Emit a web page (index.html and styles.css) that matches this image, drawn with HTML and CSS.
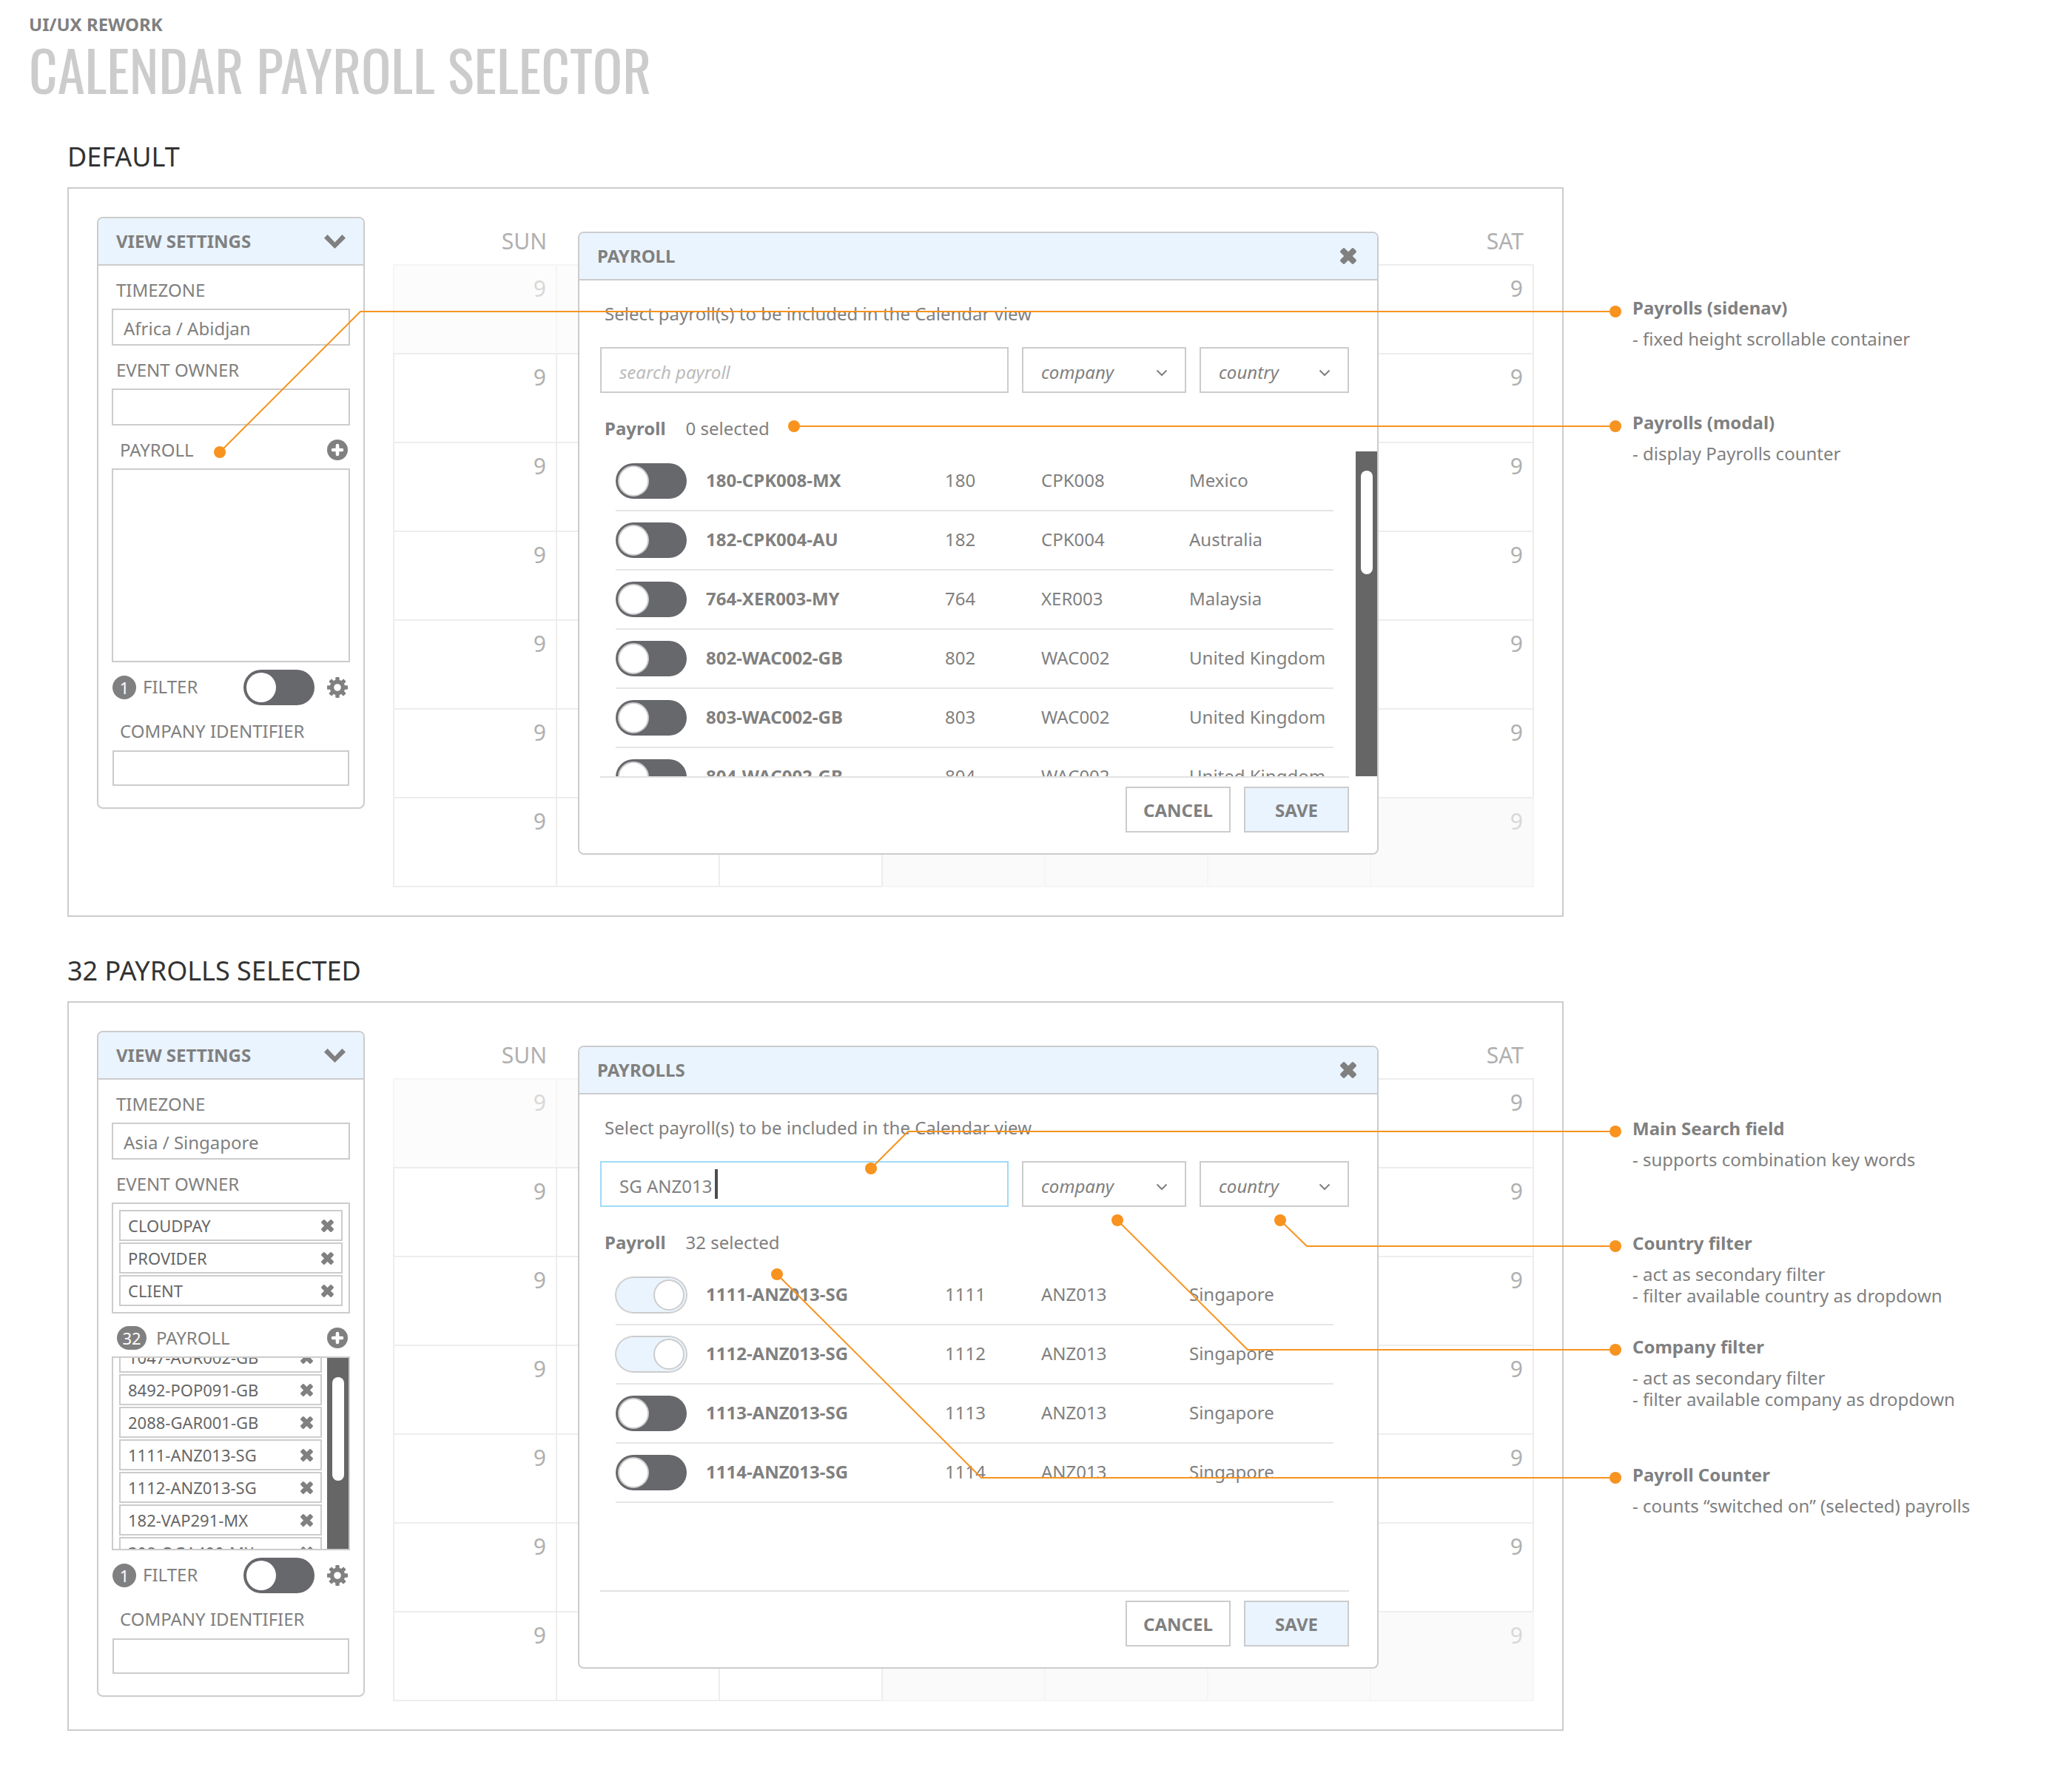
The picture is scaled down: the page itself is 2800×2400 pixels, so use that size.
FILE: index.html
```html
<!DOCTYPE html>
<html lang="en">
<head>
<meta charset="utf-8">
<title>Calendar Payroll Selector</title>
<link rel="stylesheet" href="styles.css">
</head>
<body>
<svg class="sprite" aria-hidden="true">
  <symbol id="i-chevron" viewBox="0 0 29 19"><path d="M4.6 0 14.5 10.4 24.4 0 29 4.8 14.5 19 0 4.8Z"/></symbol>
  <symbol id="i-caret" viewBox="0 0 16 10"><path d="M1.5 1.5 8 8 14.5 1.5" fill="none" stroke="currentColor" stroke-width="2"/></symbol>
  <symbol id="i-close" viewBox="-11 -11 22 22"><rect x="-12.5" y="-4" width="25" height="8" rx="2" transform="rotate(45)"/><rect x="-12.5" y="-4" width="25" height="8" rx="2" transform="rotate(-45)"/></symbol>
  <symbol id="i-plus" viewBox="-14 -14 28 28"><circle r="14"/><path d="M-6 0H6M0-6V6" stroke="#fff" stroke-width="4.6" stroke-linecap="round"/></symbol>
  <symbol id="i-gear" viewBox="-14 -14 28 28">
    <circle r="7.6" fill="none" stroke="currentColor" stroke-width="5.6"/>
    <g><rect x="-2.7" y="-14" width="5.4" height="5" rx="1"/><rect x="-2.7" y="9" width="5.4" height="5" rx="1"/><rect x="-14" y="-2.7" width="5" height="5.4" rx="1"/><rect x="9" y="-2.7" width="5" height="5.4" rx="1"/></g>
    <g transform="rotate(45)"><rect x="-2.7" y="-14" width="5.4" height="5" rx="1"/><rect x="-2.7" y="9" width="5.4" height="5" rx="1"/><rect x="-14" y="-2.7" width="5" height="5.4" rx="1"/><rect x="9" y="-2.7" width="5" height="5.4" rx="1"/></g>
  </symbol>
</svg>

<header class="page-head">
  <p class="eyebrow">UI/UX REWORK</p>
  <h1 class="title">CALENDAR PAYROLL SELECTOR</h1>
</header>

<main>
<section class="state">
  <h2 class="state-title">DEFAULT</h2>
  <div class="stage">
    <div class="frame">
      <aside class="panel">
        <header class="panel-head"><h3 class="head-text">VIEW SETTINGS</h3><button class="icon-btn" aria-label="Collapse"><svg class="ico-chevron"><use href="#i-chevron"/></svg></button></header>
        <div class="panel-body">
          <label class="label" for="tz1">TIMEZONE</label>
          <input class="field" id="tz1" type="text" value="Africa / Abidjan">
          <label class="label" for="owner1">EVENT OWNER</label>
          <input class="field" id="owner1" type="text">
          <div class="payroll-row"><span class="payroll-name">PAYROLL</span><button class="icon-btn" aria-label="Add payroll"><svg class="ico-28"><use href="#i-plus"/></svg></button></div>
          <div class="payroll-box"></div>
          <div class="filter-row"><span class="badge">1</span><label class="filter-name" for="f1">FILTER</label><input class="switch switch-plain" id="f1" type="checkbox"><button class="icon-btn" aria-label="Filter settings"><svg class="ico-28"><use href="#i-gear"/></svg></button></div>
          <label class="label label-company" for="ci1">COMPANY IDENTIFIER</label>
          <input class="field field-company" id="ci1" type="text">
        </div>
      </aside>

      <div class="calendar-wrap">
      <table class="calendar">
        <thead><tr><th>SUN</th><th></th><th></th><th></th><th></th><th></th><th>SAT</th></tr></thead>
        <tbody>
          <tr class="lead"><td class="out">9</td><td class="out"></td><td class="out"></td><td></td><td></td><td></td><td>9</td></tr>
          <tr><td>9</td><td></td><td></td><td></td><td></td><td></td><td>9</td></tr>
          <tr><td>9</td><td></td><td></td><td></td><td></td><td></td><td>9</td></tr>
          <tr><td>9</td><td></td><td></td><td></td><td></td><td></td><td>9</td></tr>
          <tr><td>9</td><td></td><td></td><td></td><td></td><td></td><td>9</td></tr>
          <tr><td>9</td><td></td><td></td><td></td><td></td><td></td><td>9</td></tr>
          <tr class="trail"><td>9</td><td></td><td></td><td class="out first"></td><td class="out"></td><td class="out"></td><td class="out">9</td></tr>
        </tbody>
      </table>
      </div>

      <div class="modal" role="dialog" aria-labelledby="m1">
        <header class="modal-head"><h3 class="head-text" id="m1">PAYROLL</h3><button class="icon-btn" aria-label="Close"><svg class="ico-22"><use href="#i-close"/></svg></button></header>
        <p class="intro">Select payroll(s) to be included in the Calendar view</p>
        <div class="filters">
          <div class="search-wrap"><input class="search" type="text" placeholder="search payroll" aria-label="Search payroll"></div>
          <div class="pick"><select aria-label="Company"><option>company</option></select><svg class="ico-caret"><use href="#i-caret"/></svg></div>
          <div class="pick"><select aria-label="Country"><option>country</option></select><svg class="ico-caret"><use href="#i-caret"/></svg></div>
        </div>
        <p class="count"><b>Payroll</b><span>0 selected</span></p>
        <div class="list">
          <table class="payrolls">
            <colgroup><col class="c-switch"><col class="c-name"><col class="c-id"><col class="c-company"><col></colgroup>
            <tbody>
              <tr><td class="cell-switch"><input class="switch" type="checkbox" aria-label="180-CPK008-MX"></td><th>180-CPK008-MX</th><td>180</td><td>CPK008</td><td>Mexico</td></tr>
              <tr><td class="cell-switch"><input class="switch" type="checkbox" aria-label="182-CPK004-AU"></td><th>182-CPK004-AU</th><td>182</td><td>CPK004</td><td>Australia</td></tr>
              <tr><td class="cell-switch"><input class="switch" type="checkbox" aria-label="764-XER003-MY"></td><th>764-XER003-MY</th><td>764</td><td>XER003</td><td>Malaysia</td></tr>
              <tr><td class="cell-switch"><input class="switch" type="checkbox" aria-label="802-WAC002-GB"></td><th>802-WAC002-GB</th><td>802</td><td>WAC002</td><td>United Kingdom</td></tr>
              <tr><td class="cell-switch"><input class="switch" type="checkbox" aria-label="803-WAC002-GB"></td><th>803-WAC002-GB</th><td>803</td><td>WAC002</td><td>United Kingdom</td></tr>
              <tr><td class="cell-switch"><input class="switch" type="checkbox" aria-label="804-WAC002-GB"></td><th>804-WAC002-GB</th><td>804</td><td>WAC002</td><td>United Kingdom</td></tr>
            </tbody>
          </table>
          <div class="track"><div class="thumb"></div></div>
        </div>
        <footer class="modal-foot"><button class="btn">CANCEL</button><button class="btn btn-save">SAVE</button></footer>
      </div>
    </div>

    <div class="notes notes-default">
      <article class="note"><h3>Payrolls (sidenav)</h3><p>- fixed height scrollable container</p></article>
      <article class="note"><h3>Payrolls (modal)</h3><p>- display Payrolls counter</p></article>
    </div>

    <svg class="callouts" aria-hidden="true">
      <path d="M206 358 396 168H2092M982 323H2092"/>
      <circle cx="206" cy="358" r="8"/><circle cx="2092" cy="168" r="8"/>
      <circle cx="982" cy="323" r="8"/><circle cx="2092" cy="323" r="8"/>
    </svg>
  </div>
</section>

<section class="state">
  <h2 class="state-title">32 PAYROLLS SELECTED</h2>
  <div class="stage">
    <div class="frame">
      <aside class="panel">
        <header class="panel-head"><h3 class="head-text">VIEW SETTINGS</h3><button class="icon-btn" aria-label="Collapse"><svg class="ico-chevron"><use href="#i-chevron"/></svg></button></header>
        <div class="panel-body">
          <label class="label" for="tz2">TIMEZONE</label>
          <input class="field" id="tz2" type="text" value="Asia / Singapore">
          <h4 class="label">EVENT OWNER</h4>
          <ul class="tags owner-tags">
            <li class="tag">CLOUDPAY<button class="icon-btn" aria-label="Remove"><svg class="ico-17"><use href="#i-close"/></svg></button></li>
            <li class="tag">PROVIDER<button class="icon-btn" aria-label="Remove"><svg class="ico-17"><use href="#i-close"/></svg></button></li>
            <li class="tag">CLIENT<button class="icon-btn" aria-label="Remove"><svg class="ico-17"><use href="#i-close"/></svg></button></li>
          </ul>
          <div class="payroll-row"><span class="badge badge-wide">32</span><span class="payroll-name">PAYROLL</span><button class="icon-btn" aria-label="Add payroll"><svg class="ico-28"><use href="#i-plus"/></svg></button></div>
          <div class="payroll-box">
            <ul class="tags scrolled-tags">
              <li class="tag">1047-AUR002-GB<button class="icon-btn" aria-label="Remove"><svg class="ico-17"><use href="#i-close"/></svg></button></li>
              <li class="tag">8492-POP091-GB<button class="icon-btn" aria-label="Remove"><svg class="ico-17"><use href="#i-close"/></svg></button></li>
              <li class="tag">2088-GAR001-GB<button class="icon-btn" aria-label="Remove"><svg class="ico-17"><use href="#i-close"/></svg></button></li>
              <li class="tag">1111-ANZ013-SG<button class="icon-btn" aria-label="Remove"><svg class="ico-17"><use href="#i-close"/></svg></button></li>
              <li class="tag">1112-ANZ013-SG<button class="icon-btn" aria-label="Remove"><svg class="ico-17"><use href="#i-close"/></svg></button></li>
              <li class="tag">182-VAP291-MX<button class="icon-btn" aria-label="Remove"><svg class="ico-17"><use href="#i-close"/></svg></button></li>
              <li class="tag">308-OGA490-MX<button class="icon-btn" aria-label="Remove"><svg class="ico-17"><use href="#i-close"/></svg></button></li>
            </ul>
            <div class="track"><div class="thumb"></div></div>
          </div>
          <div class="filter-row"><span class="badge">1</span><label class="filter-name" for="f2">FILTER</label><input class="switch switch-plain" id="f2" type="checkbox"><button class="icon-btn" aria-label="Filter settings"><svg class="ico-28"><use href="#i-gear"/></svg></button></div>
          <label class="label label-company" for="ci2">COMPANY IDENTIFIER</label>
          <input class="field field-company" id="ci2" type="text">
        </div>
      </aside>

      <div class="calendar-wrap">
      <table class="calendar">
        <thead><tr><th>SUN</th><th></th><th></th><th></th><th></th><th></th><th>SAT</th></tr></thead>
        <tbody>
          <tr class="lead"><td class="out">9</td><td class="out"></td><td class="out"></td><td></td><td></td><td></td><td>9</td></tr>
          <tr><td>9</td><td></td><td></td><td></td><td></td><td></td><td>9</td></tr>
          <tr><td>9</td><td></td><td></td><td></td><td></td><td></td><td>9</td></tr>
          <tr><td>9</td><td></td><td></td><td></td><td></td><td></td><td>9</td></tr>
          <tr><td>9</td><td></td><td></td><td></td><td></td><td></td><td>9</td></tr>
          <tr><td>9</td><td></td><td></td><td></td><td></td><td></td><td>9</td></tr>
          <tr class="trail"><td>9</td><td></td><td></td><td class="out first"></td><td class="out"></td><td class="out"></td><td class="out">9</td></tr>
        </tbody>
      </table>
      </div>

      <div class="modal" role="dialog" aria-labelledby="m2">
        <header class="modal-head"><h3 class="head-text" id="m2">PAYROLLS</h3><button class="icon-btn" aria-label="Close"><svg class="ico-22"><use href="#i-close"/></svg></button></header>
        <p class="intro">Select payroll(s) to be included in the Calendar view</p>
        <div class="filters">
          <div class="search-wrap"><input class="search search-active" type="text" value="SG ANZ013" aria-label="Search payroll"><span class="cursor"></span></div>
          <div class="pick"><select aria-label="Company"><option>company</option></select><svg class="ico-caret"><use href="#i-caret"/></svg></div>
          <div class="pick"><select aria-label="Country"><option>country</option></select><svg class="ico-caret"><use href="#i-caret"/></svg></div>
        </div>
        <p class="count"><b>Payroll</b><span>32 selected</span></p>
        <div class="list">
          <table class="payrolls">
            <colgroup><col class="c-switch"><col class="c-name"><col class="c-id"><col class="c-company"><col></colgroup>
            <tbody>
              <tr><td class="cell-switch"><input class="switch" type="checkbox" checked aria-label="1111-ANZ013-SG"></td><th>1111-ANZ013-SG</th><td>1111</td><td>ANZ013</td><td>Singapore</td></tr>
              <tr><td class="cell-switch"><input class="switch" type="checkbox" checked aria-label="1112-ANZ013-SG"></td><th>1112-ANZ013-SG</th><td>1112</td><td>ANZ013</td><td>Singapore</td></tr>
              <tr><td class="cell-switch"><input class="switch" type="checkbox" aria-label="1113-ANZ013-SG"></td><th>1113-ANZ013-SG</th><td>1113</td><td>ANZ013</td><td>Singapore</td></tr>
              <tr><td class="cell-switch"><input class="switch" type="checkbox" aria-label="1114-ANZ013-SG"></td><th>1114-ANZ013-SG</th><td>1114</td><td>ANZ013</td><td>Singapore</td></tr>
            </tbody>
          </table>
        </div>
        <footer class="modal-foot"><button class="btn">CANCEL</button><button class="btn btn-save">SAVE</button></footer>
      </div>
    </div>

    <div class="notes notes-selected">
      <article class="note"><h3>Main Search field</h3><p>- supports combination key words</p></article>
      <article class="note"><h3>Country filter</h3><p>- act as secondary filter<br>- filter available country as dropdown</p></article>
      <article class="note"><h3>Company filter</h3><p>- act as secondary filter<br>- filter available company as dropdown</p></article>
      <article class="note"><h3>Payroll Counter</h3><p>- counts “switched on” (selected) payrolls</p></article>
    </div>

    <svg class="callouts" aria-hidden="true">
      <path d="M1086 226 1136 176H2092M1639 296 1675 331H2092M1419 296 1595 471H2092M959 369 1235 644H2092"/>
      <circle cx="1086" cy="226" r="8"/><circle cx="2092" cy="176" r="8"/>
      <circle cx="1639" cy="296" r="8"/><circle cx="2092" cy="331" r="8"/>
      <circle cx="1419" cy="296" r="8"/><circle cx="2092" cy="471" r="8"/>
      <circle cx="959" cy="369" r="8"/><circle cx="2092" cy="644" r="8"/>
    </svg>
  </div>
</section>
</main>
</body>
</html>
```
FILE: styles.css
```css
:root {
  --text: #808080;
  --line: #ccc;
  --tint: #eaf4ff;
  --grid: #ededed;
  --grid-soft: #f5f5f5;
  --dark: #67686c;
  --accent: #f7931e;
}

*, *::before { box-sizing: border-box; margin: 0; padding: 0; }

body {
  background: #fff;
  color: var(--text);
  font: 24px/32px "Noto Sans", "Open Sans", sans-serif;
  padding-bottom: 56px;
}

input, select, button { font: inherit; color: inherit; }
ul { list-style: none; }
svg { display: block; fill: currentColor; }
.sprite { position: absolute; width: 0; height: 0; }

/* page header */
.page-head { padding: 17px 39px 0; }
.eyebrow { font-weight: 700; }
.title {
  color: #ccc;
  font: 400 75px/90px Oswald, "Roboto Condensed", "Open Sans Condensed", Roboto, sans-serif;
  white-space: nowrap;
}

.state { padding: 47px 0 0 91px; }
.state-title {
  margin-bottom: 15px;
  color: #333;
  font-size: 36px;
  font-weight: 400;
  line-height: 52px;
}
.stage {
  position: relative;
  display: grid;
  grid-template-columns: minmax(0, 1fr) 594px;
  column-gap: 93px;
}
.frame {
  position: relative;
  display: flex;
  align-items: flex-start;
  gap: 38px;
  padding: 38px;
  border: 2px solid var(--line);
}

/* shared pieces */
.icon-btn {
  display: flex;
  flex: none;
  border: 0;
  background: none;
}
.ico-chevron { width: 29px; height: 19px; }
.ico-28 { width: 28px; height: 28px; }
.ico-22 { width: 22px; height: 22px; }
.ico-17 { width: 17px; height: 17px; color: var(--text); }
.head-text { font-size: 24px; font-weight: 700; }

.switch {
  appearance: none;
  position: relative;
  display: block;
  flex: none;
  width: 96px;
  height: 48px;
  border-radius: 24px;
  background: var(--dark);
}
.switch::before {
  content: "";
  position: absolute;
  top: 3px;
  left: 3px;
  width: 42px;
  height: 42px;
  border: 2px solid var(--line);
  border-radius: 50%;
  background: #fff;
}
.switch:checked {
  background: var(--tint);
  box-shadow: inset 0 0 0 1px var(--line), 0 0 0 1px var(--line);
}
.switch:checked::before { left: 51px; }
.switch-plain::before {
  top: 4px;
  left: 4px;
  width: 40px;
  height: 40px;
  border: 0;
}

.track {
  flex: none;
  width: 29px;
  padding: 26px 6px 0 7px;
  background: #666;
}
.thumb { height: 140px; border-radius: 8px; background: #fff; }

/* sidebar */
.panel {
  flex: none;
  width: 362px;
  border: 2px solid var(--line);
  border-radius: 8px;
  overflow: hidden;
}
.panel-head, .modal-head {
  display: flex;
  align-items: center;
  justify-content: space-between;
  height: 64px;
  padding: 0 24px;
  border-bottom: 2px solid var(--line);
  background: var(--tint);
}
.panel-body { padding: 0 18px 29px; }
.label {
  display: flex;
  align-items: center;
  height: 58px;
  padding: 8px 6px 0;
  font-size: 24px;
  font-weight: 400;
}
.field {
  display: block;
  width: 100%;
  height: 50px;
  padding: 3px 14px 0;
  border: 2px solid var(--line);
  background: #fff;
}
.payroll-row {
  display: flex;
  align-items: center;
  gap: 13px;
  height: 58px;
  padding: 8px 3px 0 7px;
}
.payroll-name { flex: 1; }
.payroll-name:first-child { padding-left: 4px; }
.payroll-box {
  display: flex;
  height: 262px;
  border: 2px solid var(--line);
  overflow: hidden;
}
.badge {
  flex: none;
  width: 32px;
  height: 32px;
  border-radius: 16px;
  background: var(--text);
  color: #fff;
  font-size: 22px;
  text-align: center;
}
.badge-wide { width: 40px; }
.filter-row {
  display: flex;
  align-items: center;
  height: 68px;
  padding: 0 3px 0 1px;
}
.filter-name { flex: 1; padding: 0 0 2px 9px; }
.filter-row .icon-btn { margin-left: 17px; }
.label-company { height: 51px; padding: 0 11px 2px; }
.field-company { width: calc(100% - 2px); height: 48px; margin: 0 1px; }

.tags { display: flex; flex-direction: column; gap: 2px; }
.owner-tags { padding: 8px; border: 2px solid var(--line); }
.scrolled-tags { flex: 1; margin: -22px 7px 0 8px; }
.tag {
  display: flex;
  flex: none;
  align-items: center;
  justify-content: space-between;
  height: 42px;
  padding: 0 10px;
  border: 2px solid var(--line);
  color: #666;
  font-size: 22px;
}

/* calendar */
.calendar-wrap { flex: 1; min-width: 0; padding: 0 2px 2px 0; }
.calendar {
  width: 100%;
  table-layout: fixed;
  border-collapse: separate;
  border-spacing: 0;
  color: #b0b0b0;
  font-size: 30px;
  line-height: 40px;
  text-align: right;
}
.calendar th { height: 64px; padding: 2px 12px 0 0; font-weight: 400; vertical-align: middle; }
.calendar td {
  height: 120px;
  padding: 11px 13px 0 0;
  border: solid var(--grid);
  border-width: 2px 0 0 2px;
  vertical-align: top;
}
.calendar td:last-child { box-shadow: 2px 0 0 var(--grid); }
.calendar .trail td { box-shadow: 0 2px 0 var(--grid); }
.calendar .out { background: #fcfcfc; border-color: var(--grid-soft); color: #d8d8d8; }
.calendar .trail .out {
  background: #fafafa;
  border-top-color: var(--grid);
  box-shadow: 0 2px 0 var(--grid-soft);
}
.calendar .trail .first { border-left-color: var(--grid); }
.calendar .trail .out:last-child { box-shadow: 2px 0 0 var(--grid-soft), 2px 2px 0 var(--grid-soft), 0 2px 0 var(--grid-soft); }

/* dialog, laid over the calendar */
.modal {
  position: absolute;
  top: 58px;
  left: 688px;
  right: 248px;
  border: 2px solid var(--line);
  border-radius: 8px;
  background: #fff;
  overflow: hidden;
}
.modal-head { padding: 0 28px 0 24px; }
.intro { padding: 29px 34px; }
.filters {
  display: grid;
  grid-template-columns: minmax(0, 1fr) 222px 202px;
  gap: 18px;
  padding: 0 38px 0 28px;
}
.search-wrap, .pick { position: relative; height: 62px; }
.search, .pick select {
  display: block;
  width: 100%;
  height: 100%;
  padding: 5px 24px 0;
  border: 2px solid var(--line);
  border-radius: 0;
  background: #fff;
}
.search::placeholder { color: #bbb; font-style: italic; opacity: 1; }
.search-active { border-color: #9edaf8; }
.cursor {
  position: absolute;
  top: 11px;
  left: 155px;
  width: 4px;
  height: 40px;
  background: #4d4d4d;
}
.pick select { appearance: none; font-style: italic; }
.ico-caret {
  position: absolute;
  top: 30px;
  right: 25px;
  width: 16px;
  height: 10px;
  pointer-events: none;
}
.count {
  display: flex;
  align-items: center;
  gap: 27px;
  height: 79px;
  padding: 16px 34px 0;
}
.list {
  display: flex;
  justify-content: space-between;
  align-items: flex-start;
  height: 439px;
  padding-left: 49px;
  overflow: hidden;
}
.list .track { height: 100%; }
.payrolls {
  flex: 1;
  max-width: 970px;
  margin-top: 1px;
  table-layout: fixed;
  border-collapse: separate;
  border-spacing: 0;
  text-align: left;
}
.c-switch { width: 122px; }
.c-name { width: 323px; }
.c-id { width: 130px; }
.c-company { width: 200px; }
.payrolls th, .payrolls td {
  height: 80px;
  padding-bottom: 2px;
  border-bottom: 2px solid #e5e5e5;
  vertical-align: middle;
  white-space: nowrap;
}
.payrolls .cell-switch { padding: 0; }
.modal-foot {
  display: flex;
  justify-content: flex-end;
  gap: 18px;
  margin: 0 38px 0 28px;
  padding: 12px 0 28px;
  border-top: 2px solid #e2e2e2;
}
.btn {
  width: 142px;
  height: 62px;
  padding-top: 2px;
  border: 2px solid var(--line);
  background: #fff;
  font-weight: 700;
}
.btn-save { background: var(--tint); }

/* notes beside the frame */
.notes { display: grid; align-content: start; line-height: 29px; }
.notes-default { padding-top: 148px; grid-template-rows: 155px auto; }
.notes-selected { padding-top: 157px; grid-template-rows: 155px 140px 173px auto; }
.note h3 { margin-bottom: 13px; font-size: 24px; font-weight: 700; }

.callouts {
  position: absolute;
  top: 0;
  left: 0;
  width: 100%;
  height: 100%;
  overflow: visible;
  pointer-events: none;
  fill: var(--accent);
}
.callouts path { fill: none; stroke: var(--accent); stroke-width: 2; }
```
